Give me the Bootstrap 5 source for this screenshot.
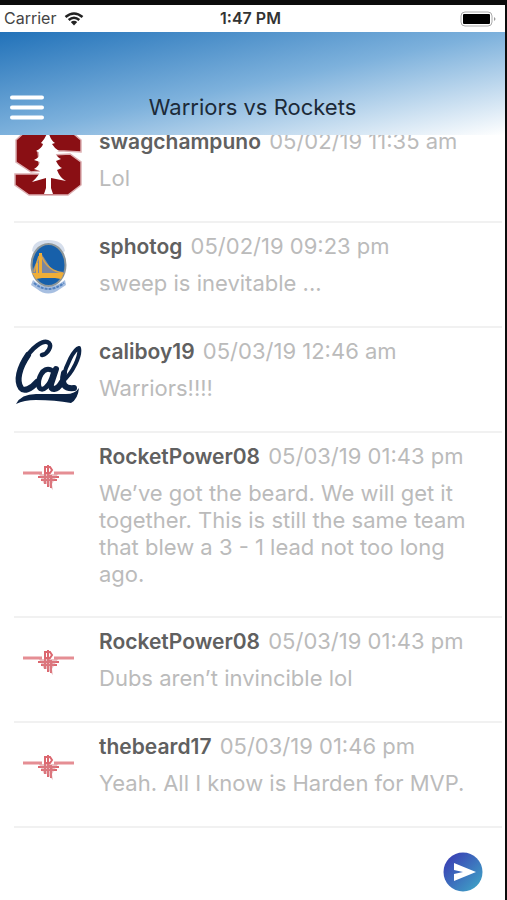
<!DOCTYPE html>
<html lang="en">
<head>
<meta charset="utf-8">
<meta name="viewport" content="width=device-width, initial-scale=1">
<title>Warriors vs Rockets</title>
<link href="https://cdn.jsdelivr.net/npm/bootstrap@5.3.0/dist/css/bootstrap.min.css" rel="stylesheet">
<style>
  body { font-family: Inter, "Liberation Sans", sans-serif; background: #fff; }
  .phone { border-top: 5px solid #0c0c0c; border-right: 2px solid #0c0c0c; }
  .status { height: 27px; font-size: 16px; line-height: 27px; color: #444; }
  .clock { font-weight: 600; color: #333; }
  .status-side { flex: 1 1 0; }
  .topbar { height: 103px; padding: 0 10px 10px; background: linear-gradient(to bottom right, #2272b9 0%, #7db1dc 50%, #fff 100%); }
  .menu-btn, .send-btn { line-height: 0; }
  .bar-side { flex: 1 1 0; }
  .topbar h1 { font-size: 22px; line-height: 35px; font-weight: 400; color: #1c2a38; }
  .feed { min-height: 0; padding: 0 3px 0 14px; }
  .message { padding: 10px 0 25px; gap: 17px; border-bottom: 2px solid #f1f1f1; }
  .avatar { width: 68px; height: 68px; }
  .words { padding-bottom: 3px; }
  .line { font-size: 22px; line-height: 27px; color: #bbb; }
  .message .line + .line { margin-top: 10px; max-width: 375px; }
  .who { font-size: 21px; font-weight: 600; color: #606060; margin-right: 2px; }
  .composer { height: 72px; padding: 0 22px 0 14px; }
  .entry { font-size: 22px; color: #606060; box-shadow: none; }
</style>
<script src="https://cdn.jsdelivr.net/npm/bootstrap@5.3.0/dist/js/bootstrap.bundle.min.js"></script>
</head>
<body>
<svg width="0" height="0" class="position-absolute" aria-hidden="true">
  <symbol id="rockets" viewBox="0 0 68 68">
    <g fill="none" stroke="#dc6870">
      <path d="M9 30H28M40 30H60" stroke-width="3" opacity=".75"/>
      <path d="M24 34H45M27 37H43" stroke-width="2"/>
      <path d="M31 24V41M34 22V44M37 32V45" stroke-width="2"/>
      <path d="M30 24H36L38 27L36 30H30M34 31L38 36" stroke-width="2"/>
    </g>
    <path d="M25 31H44L38 41L39 47L33 41H30Z" fill="#d9868c" opacity=".5"/>
  </symbol>
</svg>
<div class="phone vh-100 d-flex flex-column overflow-hidden">
  <div class="status flex-shrink-0 d-flex align-items-center pe-2">
    <div class="status-side d-flex align-items-center gap-2 ps-1">
      <span>Carrier</span>
      <svg width="20" height="14" viewBox="0 0 20 14" aria-hidden="true"><g fill="none" stroke="#222" stroke-width="2.6"><path d="M1.5 5Q10-2 18.500 5"/><path d="M4.700 8Q10 3.500 15.300 8"/></g><path d="M10 13.500L6.800 10Q10 7.500 13.200 10Z" fill="#222"/></svg>
    </div>
    <span class="clock">1:47 PM</span>
    <div class="status-side d-flex justify-content-end">
      <svg width="37" height="16" viewBox="0 0 37 16" aria-hidden="true"><rect x="1" y="1" width="31" height="14" rx="4" fill="#fff" stroke="#aaa"/><rect x="3" y="3" width="27" height="10" rx="1" fill="#000"/><path d="M34 6Q37 8 34 10Z" fill="#999"/></svg>
    </div>
  </div>

  <header class="topbar flex-shrink-0 d-flex align-items-end">
    <div class="bar-side">
      <button type="button" class="menu-btn btn p-0 border-0" aria-label="Menu">
        <svg width="34" height="35" viewBox="0 0 34 35"><path d="M2 7.500H32M2 17.500H32M2 27.500H32" stroke="#fff" stroke-width="4" stroke-linecap="round"/></svg>
      </button>
    </div>
    <h1 class="m-0">Warriors vs Rockets</h1>
    <div class="bar-side"></div>
  </header>

  <main class="feed flex-fill d-flex flex-column justify-content-end overflow-hidden">
    <article class="message d-flex flex-shrink-0">
      <svg class="avatar flex-shrink-0" viewBox="0 0 68 68" aria-hidden="true">
        <g fill="#8a0f14" stroke="#dcaeb1" stroke-width="1.500">
          <path d="M14 1H54L67 12V24L50 23H24L26 43L17 44L2 34V12Z"/>
          <path d="M38 27L56 26L67 34V57L54 67H15L1 57V46H38Z"/>
        </g>
        <path d="M34 2Q36 12 41 15L38 16Q41 21 45 23L41 25Q44 30 47 31L42 33Q45 39 48 40L43 42Q46 50 52 53L37 50V60L39 66H30L32 60V50L18 54Q25 48 26 43L20 41Q25 38 26 34L20 32Q26 29 27 25L22 23Q28 20 29 16L27 15Q32 10 34 2Z" fill="#fff"/>
      </svg>
      <div class="words">
        <p class="line mb-0"><strong class="who">swagchampuno</strong> <time>05/02/19 11:35 am</time></p>
        <p class="line mb-0">Lol</p>
      </div>
    </article>

    <article class="message d-flex flex-shrink-0">
      <svg class="avatar flex-shrink-0" viewBox="0 0 68 68" aria-hidden="true">
        <path d="M18 18Q19 7 34 7Q49 7 51 18L47 21Q34 8 22 21Z" fill="#d5deec"/>
        <path d="M19 47Q34 60 51 47L52 52L46 56Q34 65 23 56L17 52Z" fill="#a7bfe1"/>
        <path d="M20 50Q34 62 50 50" fill="none" stroke="#5382bf" stroke-width="2" stroke-dasharray="3 1"/>
        <ellipse cx="34.500" cy="32" rx="17" ry="21" fill="#1760aa" stroke="#8f9799" stroke-width="2"/>
        <path d="M27 20L38 37L50 39V43H19V36Z" fill="#7b86a0"/>
        <path d="M25 20H28V40H50L47 46L41 45H28L22 46L18 40H25Z" fill="#efae38"/>
        <path d="M28 24Q34 38 49 40M25 23L20 39" fill="none" stroke="#d8a54c" stroke-width="1.500"/>
        <path d="M23 30V42M22 41H48" stroke="#efae38" stroke-width="2"/>
        <path d="M29 45H40V48H29Z" fill="#1760aa"/>
      </svg>
      <div class="words">
        <p class="line mb-0"><strong class="who">sphotog</strong> <time>05/02/19 09:23 pm</time></p>
        <p class="line mb-0">sweep is inevitable ...</p>
      </div>
    </article>

    <article class="message d-flex flex-shrink-0">
      <svg class="avatar flex-shrink-0" viewBox="0 0 68 68" aria-hidden="true">
        <g fill="none" stroke="#0c2345" stroke-linecap="round" stroke-linejoin="round">
          <path d="M28 17C34 16 38 8 35 5C30 1 17 9 10 24" stroke-width="4.500"/>
          <path d="M14 17C5 30 2 43 7 50C10 54 17 51 23 44" stroke-width="6"/>
          <path d="M37 32C29 28 23 41 25 49C28 55 36 48 39 36" stroke-width="5"/>
          <path d="M42 31L37 46C36 53 43 53 48 44" stroke-width="6"/>
          <path d="M48 44C59 35 67 17 65 10C60 11 52 27 49 40" stroke-width="4"/>
          <path d="M50 35C47 47 51 51 60 50" stroke-width="6"/>
        </g>
        <path d="M2 66Q7 56 22 56H52Q61 56 65 50Q64 61 57 65Q41 62 22 62Q10 62 2 66Z" fill="#0c2345"/>
      </svg>
      <div class="words">
        <p class="line mb-0"><strong class="who">caliboy19</strong> <time>05/03/19 12:46 am</time></p>
        <p class="line mb-0">Warriors!!!!</p>
      </div>
    </article>

    <article class="message d-flex flex-shrink-0">
      <svg class="avatar flex-shrink-0" aria-hidden="true"><use href="#rockets"/></svg>
      <div class="words">
        <p class="line mb-0"><strong class="who">RocketPower08</strong> <time>05/03/19 01:43 pm</time></p>
        <p class="line mb-0">We’ve got the beard. We will get it together. This is still the same team that blew a 3 - 1 lead not too long ago.</p>
      </div>
    </article>

    <article class="message d-flex flex-shrink-0">
      <svg class="avatar flex-shrink-0" aria-hidden="true"><use href="#rockets"/></svg>
      <div class="words">
        <p class="line mb-0"><strong class="who">RocketPower08</strong> <time>05/03/19 01:43 pm</time></p>
        <p class="line mb-0">Dubs aren’t invincible lol</p>
      </div>
    </article>

    <article class="message d-flex flex-shrink-0">
      <svg class="avatar flex-shrink-0" aria-hidden="true"><use href="#rockets"/></svg>
      <div class="words">
        <p class="line mb-0"><strong class="who">thebeard17</strong> <time>05/03/19 01:46 pm</time></p>
        <p class="line mb-0">Yeah. All I know is Harden for MVP.</p>
      </div>
    </article>
  </main>

  <form class="composer flex-shrink-0 d-flex align-items-center gap-2 pt-3">
    <input type="text" class="entry form-control border-0 p-0" aria-label="Message">
    <button type="button" class="send-btn btn p-0 border-0" aria-label="Send">
      <svg width="40" height="40" viewBox="0 0 40 40">
        <defs><linearGradient id="send" x1="0" y1="0" x2="1" y2="1"><stop offset=".15" stop-color="#3a45b5"/><stop offset=".9" stop-color="#3fa0c6"/></linearGradient></defs>
        <circle cx="20" cy="20" r="19.500" fill="url(#send)"/>
        <path d="M11 11L33 20L11 29V22L20 20L11 18Z" fill="#fff"/>
      </svg>
    </button>
  </form>
</div>
</body>
</html>
